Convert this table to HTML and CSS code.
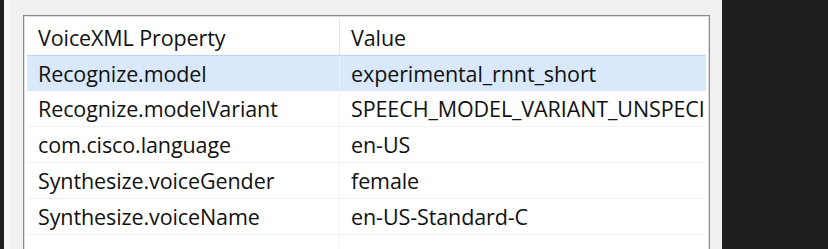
FILE: index.html
```html
<!DOCTYPE html>
<html>
<head>
<meta charset="utf-8">
<link rel="stylesheet" href="styles.css">
</head>
<body>
<div class="screen">
  <div class="panel">
    <div class="table-frame">
      <div class="table">
        <div class="row header">
          <div class="cell c1">VoiceXML Property</div>
          <div class="cell c2">Value</div>
        </div>
        <div class="row selected">
          <div class="cell c1">Recognize.model</div>
          <div class="cell c2">experimental_rnnt_short</div>
        </div>
        <div class="row">
          <div class="cell c1">Recognize.modelVariant</div>
          <div class="cell c2">SPEECH_MODEL_VARIANT_UNSPECIFIED</div>
        </div>
        <div class="row">
          <div class="cell c1">com.cisco.language</div>
          <div class="cell c2">en-US</div>
        </div>
        <div class="row">
          <div class="cell c1">Synthesize.voiceGender</div>
          <div class="cell c2">female</div>
        </div>
        <div class="row">
          <div class="cell c1">Synthesize.voiceName</div>
          <div class="cell c2">en-US-Standard-C</div>
        </div>
        <div class="row empty">
          <div class="cell c1"></div>
          <div class="cell c2"></div>
        </div>
      </div>
    </div>
  </div>
</div>
</body>
</html>
```
FILE: styles.css
```css
html, body {
  margin: 0;
  padding: 0;
  background: #1e1e1e;
  overflow: hidden;
}

.screen {
  display: flex;
  height: 249px;
  width: 828px;
  padding-left: 4px;
  box-sizing: border-box;
}

.panel {
  width: 718px;
  height: 249px;
  background: #f0f0f0;
  border-left: 6px solid #f6f6f6;
  box-sizing: border-box;
  padding: 15px 12px 0 13px;
  overflow: hidden;
}

.table-frame {
  border: 1px solid #8b8b8b;
  box-shadow: inset 0 0 0 1px #dedede;
  background: #ffffff;
  padding: 3px 3px 0 3px;
  height: 260px;
  box-sizing: border-box;
}

.table {
  font-family: "Open Sans", "Noto Sans", sans-serif;
  font-size: 21.5px;
  letter-spacing: -0.1px;
  color: #111111;
  overflow: hidden;
}

.row {
  display: flex;
  height: 35px;
  border-bottom: 1px solid #f0f0f0;
  align-items: center;
}

.row.header {
  height: 36px;
  border-bottom: none;
}

.row.header .c1 {
  border-right: 1px solid #e5e5e5;
  align-self: stretch;
}

.row.selected {
  background: #d9e8fa;
  border-top: 1px solid #b9d4f2;
  height: 34px;
  border-bottom: 1px solid #dbe7f5;
}

.cell {
  display: flex;
  align-items: center;
  white-space: nowrap;
  overflow: hidden;
  box-sizing: border-box;
  height: 100%;
}

.c1 {
  width: 313px;
  flex: none;
  padding-left: 11px;
  border-right: 1px solid #f2f2f2;
}

.c2 {
  flex: 1;
  min-width: 0;
  padding-left: 11px;
  overflow: hidden;
}
```
